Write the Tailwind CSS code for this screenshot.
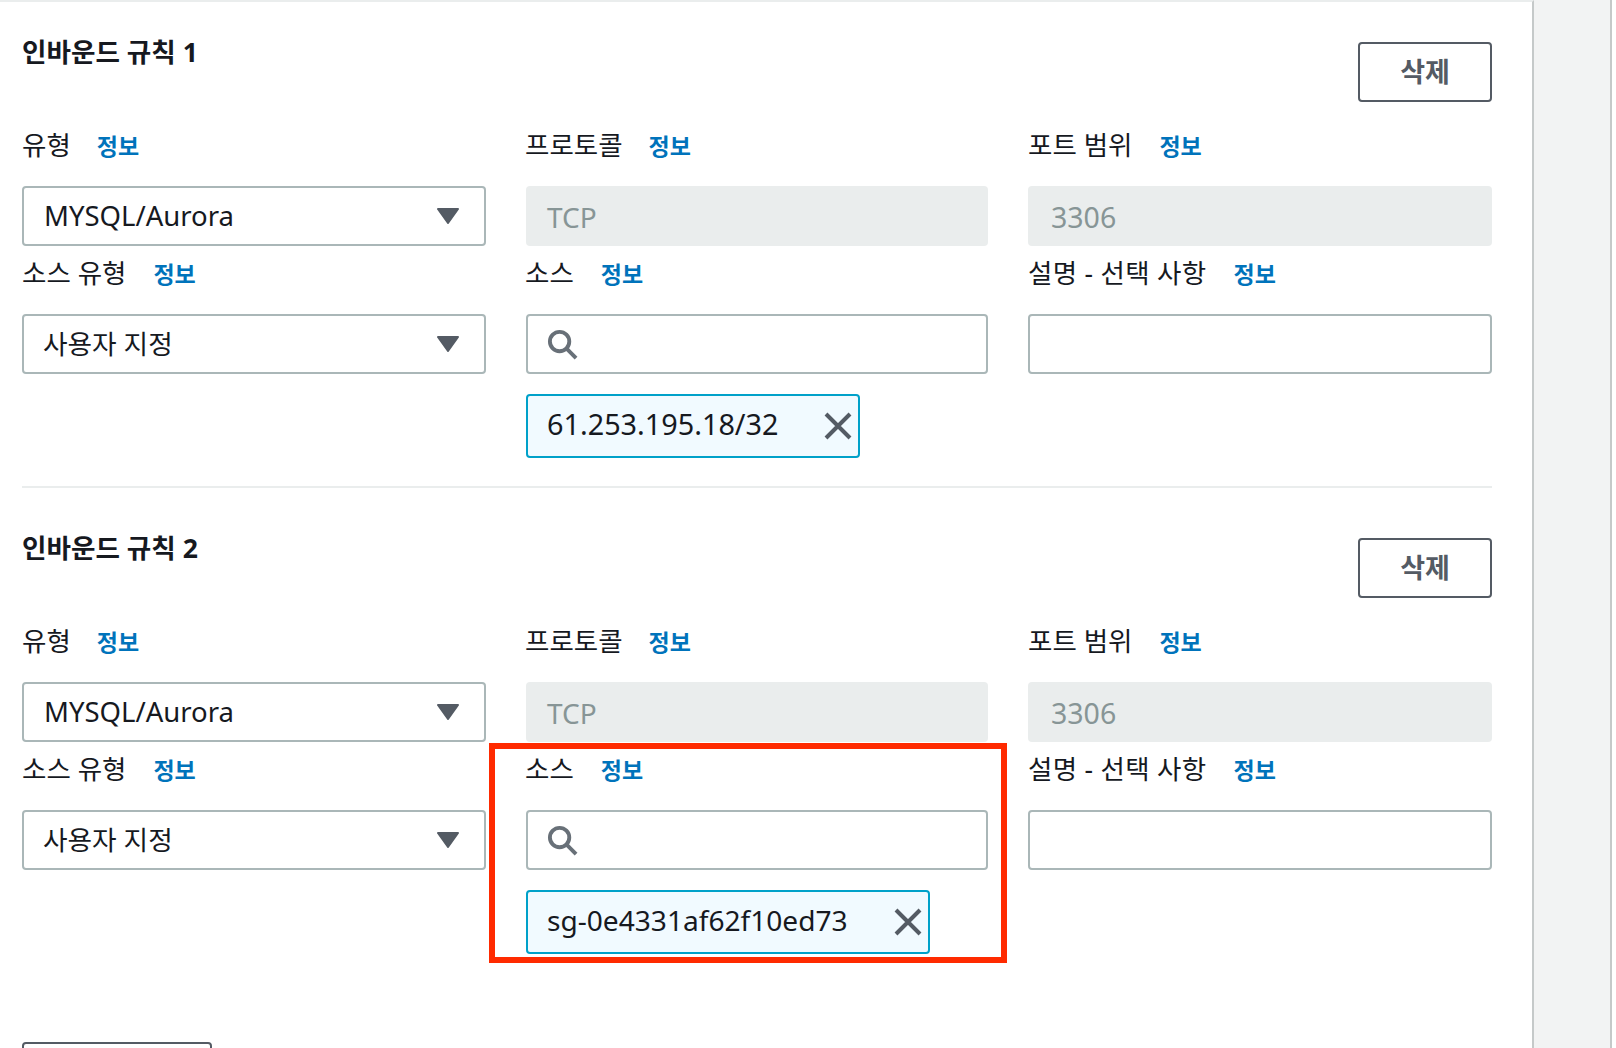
<!DOCTYPE html>
<html lang="ko">
<head>
  <meta charset="UTF-8" />
  <title>인바운드 규칙</title>
  <script src="https://cdn.jsdelivr.net/npm/@tailwindcss/browser@4"></script>
</head>
<body class="relative flex h-[1048px] overflow-hidden bg-white font-['Noto_Sans','Noto_Sans_CJK_KR',sans-serif] text-[#16191f]">
  <div class="h-[1048px] w-[1534px] shrink-0 border-t-2 border-r-2 border-t-[#eaeded] border-r-[#c5c9c9] bg-white pl-[22px] pr-[40px]">
    <!-- 규칙 1 -->
    <section class="pt-[40px]">
      <div class="flex h-[60px] items-start justify-between">
        <h2 class="mt-[-8px] text-[26.6px] leading-[36px] font-bold">인바운드 규칙 1</h2>
        <button class="h-[60px] w-[134px] rounded-[4px] border-2 border-[#545b64] text-[27px] font-bold text-[#545b64]">삭제</button>
      </div>
      <div class="grid grid-cols-[464px_462px_464px] gap-x-[40px]">
        <div>
          <div class="flex h-[84px] items-center gap-[26px] pt-[4px] text-[26.5px]"><span>유형</span><a class="text-[23px] font-bold text-[#0073bb]">정보</a></div>
          <div class="flex h-[60px] items-center justify-between rounded-[4px] border-2 border-[#aab7b8] pr-[25px] pl-[20px] text-[27.5px]"><span class="mb-[1px]">MYSQL/Aurora</span><svg width="22" height="16" viewBox="0 0 22 16"><path d="M1 1H21L11 15Z" fill="#545b64" stroke="#545b64" stroke-width="2" stroke-linejoin="round"/></svg></div>
          <div class="flex h-[68px] items-center gap-[27px] pb-[12px] text-[26.5px]"><span>소스 유형</span><a class="text-[23px] font-bold text-[#0073bb]">정보</a></div>
          <div class="flex h-[60px] items-center justify-between rounded-[4px] border-2 border-[#aab7b8] pr-[25px] pl-[19px] text-[26.7px]"><span>사용자 지정</span><svg width="22" height="16" viewBox="0 0 22 16"><path d="M1 1H21L11 15Z" fill="#545b64" stroke="#545b64" stroke-width="2" stroke-linejoin="round"/></svg></div>
        </div>
        <div>
          <div class="ml-[-1px] flex h-[84px] items-center gap-[26px] pt-[4px] text-[26.5px]"><span>프로토콜</span><a class="text-[23px] font-bold text-[#0073bb]">정보</a></div>
          <div class="flex h-[60px] items-center rounded-[4px] bg-[#eaeded] pt-[2px] pl-[21px] text-[28px] text-[#879596]">TCP</div>
          <div class="ml-[-1px] flex h-[68px] items-center gap-[27px] pb-[12px] text-[26.5px]"><span>소스</span><a class="text-[23px] font-bold text-[#0073bb]">정보</a></div>
          <div class="flex h-[60px] items-center rounded-[4px] border-2 border-[#aab7b8] pl-[19px]"><svg width="31" height="31" viewBox="0 0 32 32" fill="none" stroke="#687078" stroke-width="4"><circle cx="13" cy="13" r="10"/><path d="M20 20L30 30"/></svg></div>
          <div class="mt-[20px] flex h-[64px] w-[334px] items-center justify-between rounded-[4px] border-2 border-[#00a1c9] bg-[#f1faff] pr-[6px] pl-[19px] text-[28.8px]"><span class="mb-[4px]">61.253.195.18/32</span><svg width="28" height="28" viewBox="0 0 28 28" stroke="#545b64" stroke-width="4"><path d="M2 2L26 26M26 2L2 26"/></svg></div>
        </div>
        <div>
          <div class="flex h-[84px] items-center gap-[27px] pt-[4px] text-[26.5px]"><span>포트 범위</span><a class="text-[23px] font-bold text-[#0073bb]">정보</a></div>
          <div class="flex h-[60px] items-center rounded-[4px] bg-[#eaeded] pt-[2px] pl-[23px] text-[28.5px] text-[#879596]">3306</div>
          <div class="flex h-[68px] items-center gap-[27px] pb-[12px] text-[26.5px]"><span class="tracking-[0.3px]">설명 - 선택 사항</span><a class="text-[23px] font-bold text-[#0073bb]">정보</a></div>
          <div class="h-[60px] rounded-[4px] border-2 border-[#aab7b8]"></div>
        </div>
      </div>
      <div class="mt-[28px] h-[2px] bg-[#eaeded]"></div>
    </section>
    <!-- 규칙 2 -->
    <section class="pt-[50px]">
      <div class="flex h-[60px] items-start justify-between">
        <h2 class="mt-[-8px] text-[26.6px] leading-[36px] font-bold">인바운드 규칙 2</h2>
        <button class="h-[60px] w-[134px] rounded-[4px] border-2 border-[#545b64] text-[27px] font-bold text-[#545b64]">삭제</button>
      </div>
      <div class="grid grid-cols-[464px_462px_464px] gap-x-[40px]">
        <div>
          <div class="flex h-[84px] items-center gap-[26px] pt-[4px] text-[26.5px]"><span>유형</span><a class="text-[23px] font-bold text-[#0073bb]">정보</a></div>
          <div class="flex h-[60px] items-center justify-between rounded-[4px] border-2 border-[#aab7b8] pr-[25px] pl-[20px] text-[27.5px]"><span class="mb-[1px]">MYSQL/Aurora</span><svg width="22" height="16" viewBox="0 0 22 16"><path d="M1 1H21L11 15Z" fill="#545b64" stroke="#545b64" stroke-width="2" stroke-linejoin="round"/></svg></div>
          <div class="flex h-[68px] items-center gap-[27px] pb-[12px] text-[26.5px]"><span>소스 유형</span><a class="text-[23px] font-bold text-[#0073bb]">정보</a></div>
          <div class="flex h-[60px] items-center justify-between rounded-[4px] border-2 border-[#aab7b8] pr-[25px] pl-[19px] text-[26.7px]"><span>사용자 지정</span><svg width="22" height="16" viewBox="0 0 22 16"><path d="M1 1H21L11 15Z" fill="#545b64" stroke="#545b64" stroke-width="2" stroke-linejoin="round"/></svg></div>
        </div>
        <div>
          <div class="ml-[-1px] flex h-[84px] items-center gap-[26px] pt-[4px] text-[26.5px]"><span>프로토콜</span><a class="text-[23px] font-bold text-[#0073bb]">정보</a></div>
          <div class="flex h-[60px] items-center rounded-[4px] bg-[#eaeded] pt-[2px] pl-[21px] text-[28px] text-[#879596]">TCP</div>
          <div class="ml-[-1px] flex h-[68px] items-center gap-[27px] pb-[12px] text-[26.5px]"><span>소스</span><a class="text-[23px] font-bold text-[#0073bb]">정보</a></div>
          <div class="flex h-[60px] items-center rounded-[4px] border-2 border-[#aab7b8] pl-[19px]"><svg width="31" height="31" viewBox="0 0 32 32" fill="none" stroke="#687078" stroke-width="4"><circle cx="13" cy="13" r="10"/><path d="M20 20L30 30"/></svg></div>
          <div class="mt-[20px] flex h-[64px] w-[404px] items-center justify-between rounded-[4px] border-2 border-[#00a1c9] bg-[#f1faff] pr-[6px] pl-[19px] text-[28.1px]"><span class="mb-[4px]">sg-0e4331af62f10ed73</span><svg width="28" height="28" viewBox="0 0 28 28" stroke="#545b64" stroke-width="4"><path d="M2 2L26 26M26 2L2 26"/></svg></div>
        </div>
        <div>
          <div class="flex h-[84px] items-center gap-[27px] pt-[4px] text-[26.5px]"><span>포트 범위</span><a class="text-[23px] font-bold text-[#0073bb]">정보</a></div>
          <div class="flex h-[60px] items-center rounded-[4px] bg-[#eaeded] pt-[2px] pl-[23px] text-[28.5px] text-[#879596]">3306</div>
          <div class="flex h-[68px] items-center gap-[27px] pb-[12px] text-[26.5px]"><span class="tracking-[0.3px]">설명 - 선택 사항</span><a class="text-[23px] font-bold text-[#0073bb]">정보</a></div>
          <div class="h-[60px] rounded-[4px] border-2 border-[#aab7b8]"></div>
        </div>
      </div>
      <div class="mt-[88px] h-[60px] w-[190px] rounded-[4px] border-2 border-[#545b64]"></div>
    </section>
  </div>
  <!-- 오른쪽 여백 -->
  <div class="h-[1048px] w-[78px] shrink-0 border-r-2 border-r-[#c5c9c9] bg-[#f2f3f3]"></div>
  <!-- 강조 표시 -->
  <div class="absolute top-[743px] left-[489px] h-[220px] w-[518px] border-[6px] border-[#ff2a00]"></div>
</body>
</html>
